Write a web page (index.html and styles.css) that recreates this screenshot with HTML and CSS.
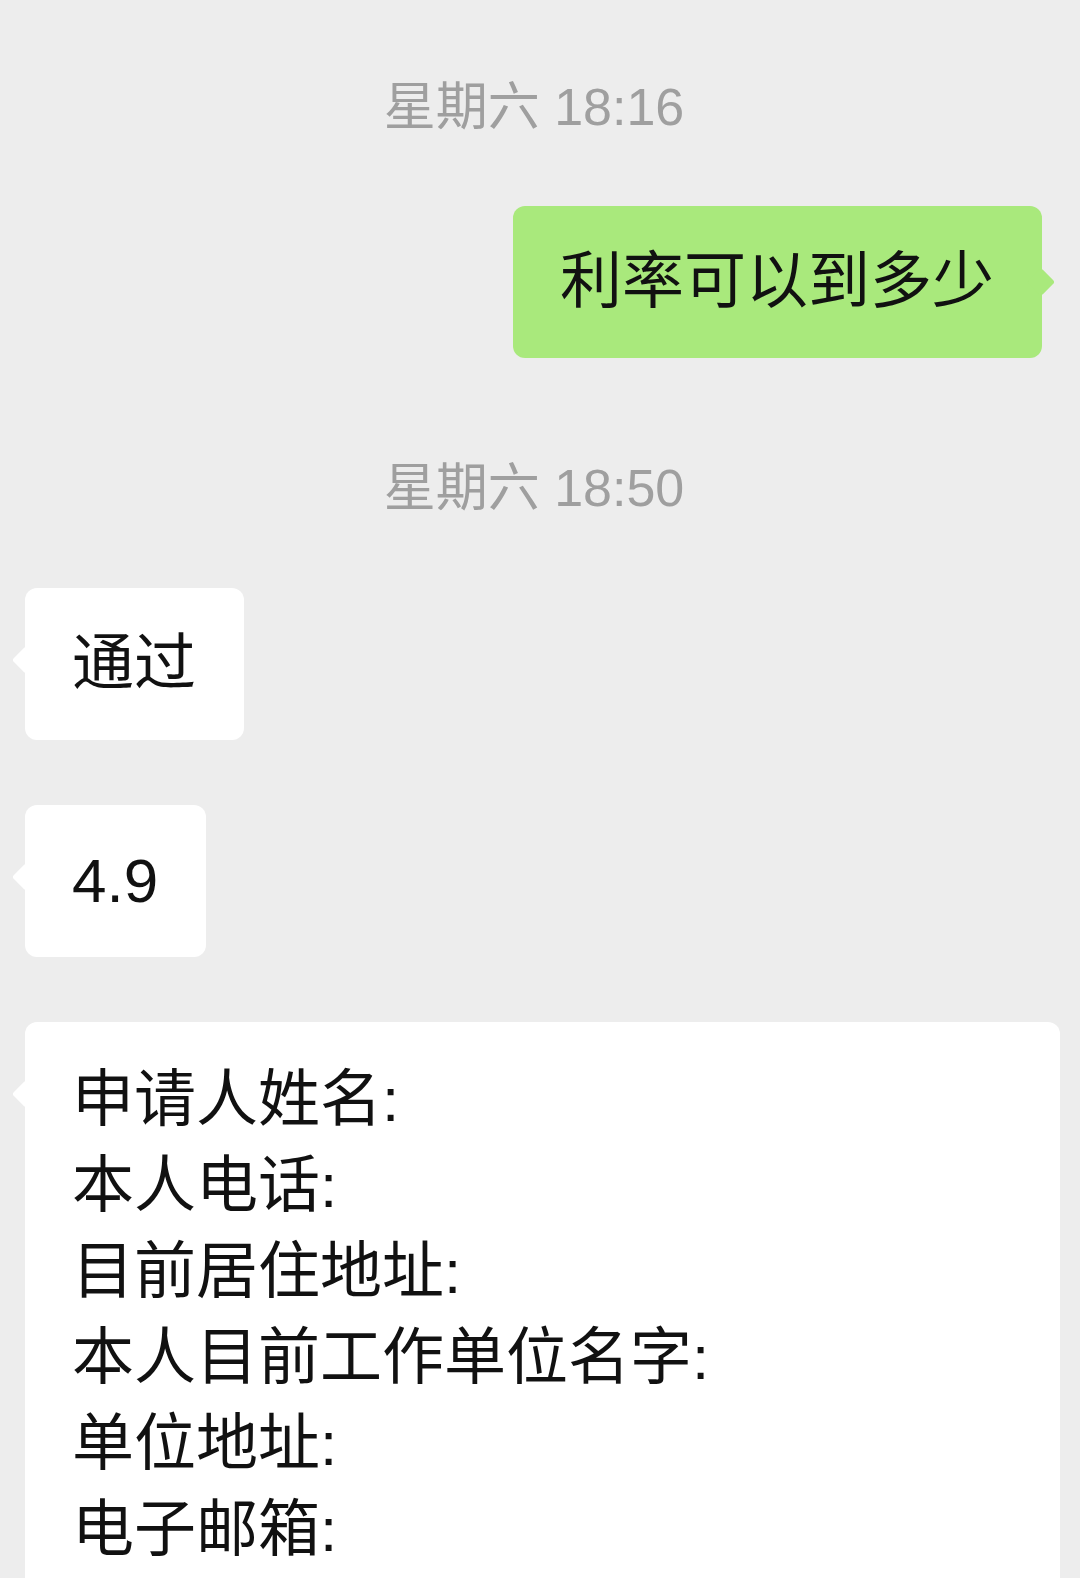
FILE: index.html
```html
<!DOCTYPE html>
<html lang="zh-CN">
<head>
<meta charset="utf-8">
<link rel="stylesheet" href="styles.css">
</head>
<body>
<div class="chat">
  <div class="time t1">星期六 18:16</div>
  <div class="row right">
    <div class="bubble green">利率可以到多少</div>
  </div>
  <div class="time t2">星期六 18:50</div>
  <div class="row left">
    <div class="bubble white">通过</div>
  </div>
  <div class="row left">
    <div class="bubble white">4.9</div>
  </div>
  <div class="row left wide">
    <div class="bubble white full">申请人姓名:<br>本人电话:<br>目前居住地址:<br>本人目前工作单位名字:<br>单位地址:<br>电子邮箱:</div>
  </div>
</div>
</body>
</html>
```

FILE: styles.css
```css
html, body {
  margin: 0;
  padding: 0;
  background: #ededed;
}
body {
  width: 1080px;
  height: 1578px;
  overflow: hidden;
  font-family: "Liberation Sans", "Noto Sans CJK SC", sans-serif;
  color: #111;
}
.chat {
  display: flex;
  flex-direction: column;
  padding: 0 20px 0 25px;
}
.time {
  height: 60px;
  line-height: 60px;
  font-size: 52px;
  color: #9f9f9f;
  text-align: center;
  padding-right: 17px;
}
.t1 { margin-top: 77px; margin-bottom: 69px; }
.t2 { margin-top: 100px; margin-bottom: 70px; }
.row {
  display: flex;
}
.row.right {
  justify-content: flex-end;
  padding-right: 18px;
}
.row.left + .row.left { margin-top: 65px; }
.bubble {
  position: relative;
  font-size: 62px;
  line-height: 86px;
  padding: 33px 48px 33px 47px;
  border-radius: 12px;
}
.green { background: #a9e97c; }
.white { background: #ffffff; }
.full { flex: 1; padding-top: 35px; }
.bubble::after {
  content: "";
  position: absolute;
  top: 62px;
  width: 20px;
  height: 20px;
  border-radius: 3px;
  transform: rotate(45deg);
}
.green::after {
  top: 66px;
  right: -9px;
  background: #a9e97c;
}
.white::after {
  left: -9px;
  background: #ffffff;
}
```
